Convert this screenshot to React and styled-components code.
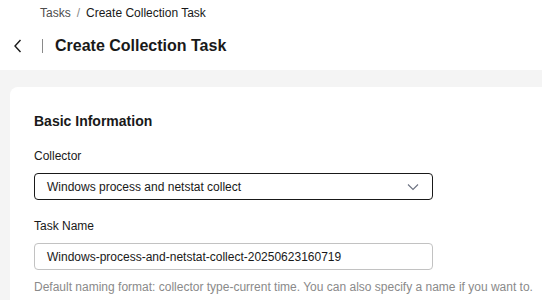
import styled, { createGlobalStyle } from "styled-components";

const GlobalStyle = createGlobalStyle`
  html, body {
    margin: 0;
    padding: 0;
    background: #f4f4f4;
    font-family: "Liberation Sans", Arial, sans-serif;
    color: #191919;
  }
  * { box-sizing: border-box; }
`;

export default function App() {
  return (
    <Page>
      <GlobalStyle />
      <Header>
        <Breadcrumb>
          <Crumb>Tasks</Crumb>
          <Sep>/</Sep>
          <Crumb $current>Create Collection Task</Crumb>
        </Breadcrumb>
        <TitleRow>
          <BackButton aria-label="back">
            <svg width="10" height="14" viewBox="0 0 10 14" fill="none">
              <path d="M7.5 1L2 7l5.5 6" stroke="#191919" strokeWidth="1.4" />
            </svg>
          </BackButton>
          <Divider />
          <Title>Create Collection Task</Title>
        </TitleRow>
      </Header>

      <Main>
        <Card>
          <SectionTitle>Basic Information</SectionTitle>

          <Field>
            <Label>Collector</Label>
            <Select $active>
              <span>Windows process and netstat collect</span>
              <svg width="12" height="8" viewBox="0 0 12 8" fill="none">
                <path d="M1 1.5l5 5 5-5" stroke="#6b7180" strokeWidth="1.1" />
              </svg>
            </Select>
          </Field>

          <Field>
            <Label>Task Name</Label>
            <Select>
              <span>Windows-process-and-netstat-collect-20250623160719</span>
            </Select>
            <Help>
              Default naming format: collector type-current time. You can also
              specify a name if you want to.
            </Help>
          </Field>
        </Card>
      </Main>
    </Page>
  );
}

const Page = styled.div`
  min-height: 300px;
  display: flex;
  flex-direction: column;
`;

const Header = styled.header`
  background: #ffffff;
  height: 70px;
  padding: 4px 0 0 0;
`;

const Breadcrumb = styled.nav`
  display: flex;
  align-items: center;
  gap: 6px;
  padding-left: 40px;
  font-size: 12px;
  line-height: 18px;
`;

const Crumb = styled.span`
  color: ${(p) => (p.$current ? "#191919" : "#4d4d4d")};
`;

const Sep = styled.span`
  color: #8a8a8a;
`;

const TitleRow = styled.div`
  display: flex;
  align-items: center;
  height: 24px;
  margin-top: 12px;
`;

const BackButton = styled.button`
  border: none;
  background: none;
  padding: 0;
  margin-left: 13px;
  width: 10px;
  height: 14px;
  display: flex;
  align-items: center;
`;

const Divider = styled.span`
  width: 1px;
  height: 14px;
  background: #8a8a8a;
  margin-left: 19px;
`;

const Title = styled.h1`
  margin: 0 0 0 12px;
  font-size: 16px;
  line-height: 24px;
  font-weight: 700;
  color: #191919;
`;

const Main = styled.main`
  flex: 1;
  padding: 17px 0 0 10px;
  display: flex;
`;

const Card = styled.section`
  flex: 1;
  background: #ffffff;
  border-radius: 8px 0 0 0;
  padding: 24px 24px 0 24px;
`;

const SectionTitle = styled.h2`
  margin: 0;
  font-size: 14px;
  line-height: 20px;
  font-weight: 700;
`;

const Field = styled.div`
  margin-top: 16px;
  display: flex;
  flex-direction: column;
  & + & {
    margin-top: 17px;
  }
`;

const Label = styled.label`
  font-size: 12px;
  line-height: 18px;
  margin-bottom: 8px;
`;

const Select = styled.div`
  width: 399px;
  height: 27px;
  display: flex;
  align-items: center;
  justify-content: space-between;
  padding: 0 13px 0 12px;
  border: 1px solid ${(p) => (p.$active ? "#191919" : "#c2c2c2")};
  border-radius: 4px;
  font-size: 12px;
  color: #191919;
`;

const Help = styled.p`
  margin: 8px 0 0 0;
  font-size: 12px;
  line-height: 18px;
  color: #8a8a8a;
  white-space: nowrap;
`;
